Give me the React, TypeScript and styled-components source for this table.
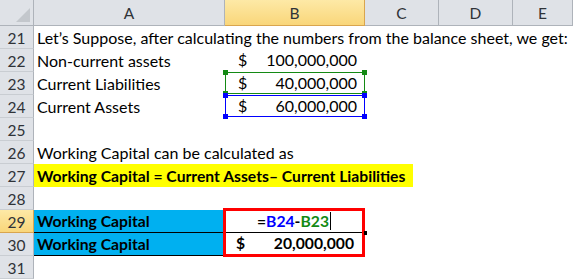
import React from "react";
import styled, { createGlobalStyle, css } from "styled-components";

const Global = createGlobalStyle`
  html, body { margin: 0; padding: 0; background: #ffffff; }
  body { font-family: Lato, "Open Sans", sans-serif; }
`;

const Sheet = styled.div`
  display: grid;
  grid-template-columns: 34px 191px 140px 74px 74px 60px;
  grid-template-rows: 26px repeat(11, 23px);
  width: 573px;
  height: 280px;
  overflow: hidden;
  font-family: Lato, "Open Sans", sans-serif;
  font-size: 16px;
  color: #000;
`;

const headerBase = css`
  box-sizing: border-box;
  background: #dfe2e7;
  border-right: 1px solid #aeb3ba;
  border-bottom: 1px solid #aeb3ba;
  display: flex;
  align-items: center;
  justify-content: center;
  color: #2f3338;
  font-size: 15.5px;
`;

const activeHeader = css`
  background: linear-gradient(#fde9a6, #f9d67a);
  border-right-color: #d9a54e;
  border-bottom-color: #d9a54e;
`;

const Corner = styled.div`
  ${headerBase};
  position: relative;
`;

const CornerTriangle = styled.div`
  position: absolute;
  right: 3px;
  bottom: 3px;
  width: 0;
  height: 0;
  border-left: 14px solid transparent;
  border-bottom: 14px solid #c3c7cc;
`;

const ColHeader = styled.div<{ $active?: boolean }>`
  ${headerBase};
  padding-top: 1px;
  ${(p) => p.$active && activeHeader};
`;

const RowHeader = styled.div<{ $active?: boolean }>`
  ${headerBase};
  border-bottom-color: #c9cdd2;
  padding-top: 2px;
  ${(p) => p.$active && activeHeader};
`;

const Cell = styled.div<{ $bg?: string; $bold?: boolean; $line?: boolean }>`
  box-sizing: border-box;
  position: relative;
  white-space: nowrap;
  overflow: visible;
  padding: 0 0 0 3px;
  display: flex;
  align-items: flex-end;
  padding-bottom: 1px;
  line-height: 20px;
  background: ${(p) => p.$bg ?? "transparent"};
  font-weight: ${(p) => (p.$bold ? 700 : 400)};
  font-size: ${(p) => (p.$bold ? "15.7px" : "16px")};
  border-bottom: ${(p) => (p.$line ? "1px solid #000" : "none")};
  z-index: 1;
`;

const RowSpan = styled.div`
  grid-column: 2 / span 5;
  display: flex;
  align-items: flex-end;
  padding: 0 0 1px 3px;
  line-height: 20px;
  white-space: nowrap;
`;

const HighlightRow = styled.div`
  grid-column: 2 / span 5;
  display: flex;
`;

const Highlight = styled.div`
  box-sizing: border-box;
  width: 379px;
  height: 100%;
  background: #ffff00;
  font-weight: 700;
  font-size: 15.7px;
  padding: 0 0 1px 3px;
  display: flex;
  align-items: flex-end;
  line-height: 20px;
  white-space: nowrap;
`;

const Money = styled.div<{ $bold?: boolean }>`
  box-sizing: border-box;
  width: 100%;
  display: flex;
  justify-content: space-between;
  align-items: flex-end;
  padding: 0 8px 1px 10px;
  line-height: 20px;
  height: 100%;
  font-weight: ${(p) => (p.$bold ? 700 : 400)};
  font-size: ${(p) => (p.$bold ? "15.7px" : "16px")};
  white-space: nowrap;
`;

const Selection = styled.div<{ $color: string }>`
  position: absolute;
  left: 0;
  right: 0;
  top: 0;
  bottom: 1px;
  border: 1px solid ${(p) => p.$color};
  pointer-events: none;
`;

const Handle = styled.span<{ $color: string; $x: "left" | "right"; $y: "top" | "bottom" }>`
  position: absolute;
  width: 5px;
  height: 5px;
  background: ${(p) => p.$color};
  ${(p) => p.$x}: -3px;
  ${(p) => p.$y}: -3px;
`;

const RedBox = styled.div`
  grid-column: 3;
  grid-row: 10 / span 2;
  box-sizing: border-box;
  margin: -2px 0 -1px -2px;
  border: 3px solid #ff0000;
  display: grid;
  grid-template-rows: 1fr 1fr;
  position: relative;
  z-index: 2;
`;

const FormulaRow = styled.div`
  border-bottom: 1px solid #000;
  display: flex;
  justify-content: flex-end;
  align-items: flex-end;
  padding: 0 33px 1px 0;
  line-height: 20px;
  font-weight: 700;
  font-size: 15.7px;
  position: relative;
`;

const Ref = styled.span<{ $c: string }>`
  color: ${(p) => p.$c};
`;

const Caret = styled.span`
  position: absolute;
  right: 31px;
  bottom: 2px;
  width: 1px;
  height: 18px;
  background: #000;
`;

const FillMark = styled.span`
  position: absolute;
  right: -5px;
  bottom: -3px;
  width: 3px;
  height: 4px;
  background: #000;
`;

const Box = ({ color }: { color: string }) => (
  <Selection $color={color}>
    <Handle $color={color} $x="left" $y="top" />
    <Handle $color={color} $x="right" $y="top" />
    <Handle $color={color} $x="left" $y="bottom" />
    <Handle $color={color} $x="right" $y="bottom" />
  </Selection>
);

const cols = ["A", "B", "C", "D", "E"];

export default function App() {
  return (
    <>
      <Global />
      <Sheet>
        <Corner>
          <CornerTriangle />
        </Corner>
        {cols.map((c) => (
          <ColHeader key={c} $active={c === "B"}>
            {c}
          </ColHeader>
        ))}

        <RowHeader>21</RowHeader>
        <RowSpan>Let’s Suppose, after calculating the numbers from the balance sheet, we get:</RowSpan>

        <RowHeader>22</RowHeader>
        <Cell>Non-current assets</Cell>
        <Cell>
          <Money>
            <span>$</span>
            <span>100,000,000</span>
          </Money>
        </Cell>
        <Cell />
        <Cell />
        <Cell />

        <RowHeader>23</RowHeader>
        <Cell>Current Liabilities</Cell>
        <Cell>
          <Money>
            <span>$</span>
            <span>40,000,000</span>
          </Money>
          <Box color="#148a14" />
        </Cell>
        <Cell />
        <Cell />
        <Cell />

        <RowHeader>24</RowHeader>
        <Cell>Current Assets</Cell>
        <Cell>
          <Money>
            <span>$</span>
            <span>60,000,000</span>
          </Money>
          <Box color="#0000ff" />
        </Cell>
        <Cell />
        <Cell />
        <Cell />

        <RowHeader>25</RowHeader>
        <RowSpan />

        <RowHeader>26</RowHeader>
        <RowSpan>Working Capital can be calculated as</RowSpan>

        <RowHeader>27</RowHeader>
        <HighlightRow>
          <Highlight>Working Capital = Current Assets– Current Liabilities</Highlight>
        </HighlightRow>

        <RowHeader>28</RowHeader>
        <RowSpan />

        <RowHeader $active>29</RowHeader>
        <Cell $bg="#00b0f0" $bold $line>
          Working Capital
        </Cell>
        <RedBox>
          <FormulaRow>
            <span>=</span>
            <Ref $c="#0000ff">B24</Ref>
            <span>-</span>
            <Ref $c="#148a14">B23</Ref>
            <Caret />
            <FillMark />
          </FormulaRow>
          <Money $bold>
            <span>$</span>
            <span>20,000,000</span>
          </Money>
        </RedBox>
        <Cell />
        <Cell />
        <Cell />

        <RowHeader>30</RowHeader>
        <Cell $bg="#00b0f0" $bold $line>
          Working Capital
        </Cell>
        <Cell />
        <Cell />
        <Cell />

        <RowHeader>31</RowHeader>
        <RowSpan />
      </Sheet>
    </>
  );
}
